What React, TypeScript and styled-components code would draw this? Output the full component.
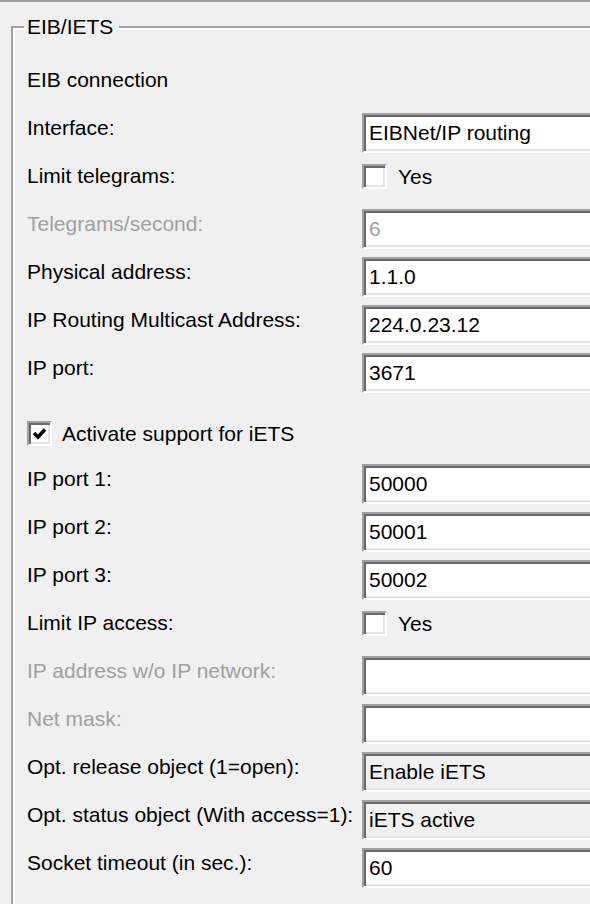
import React from "react";
import styled, { createGlobalStyle } from "styled-components";

const GlobalStyle = createGlobalStyle`
  html, body {
    margin: 0;
    padding: 0;
    background: #f0f0f0;
  }
  body {
    font-family: "Liberation Sans", Arial, sans-serif;
    overflow: hidden;
  }
`;

const Page = styled.div`
  width: 590px;
  height: 904px;
  box-sizing: border-box;
  overflow: hidden;
  border-top: 2px solid #a0a0a0;
  background: #f0f0f0;
`;

const Group = styled.fieldset`
  margin: 13px 0 0 11px;
  padding: 26px 0 20px 14px;
  width: 640px;
  border: 2px solid #a0a0a0;
  box-shadow: inset 2px 2px 0 #fff;
  display: flex;
  flex-direction: column;
  gap: 8px;
`;

const Legend = styled.legend`
  margin-left: -3px;
  padding: 0 6px 0 3px;
  font-size: 21px;
  line-height: 24px;
  color: #000;
  background: #f0f0f0;
`;

const Row = styled.div`
  display: grid;
  grid-template-columns: 335px 260px;
  align-items: start;
  height: 40px;
`;

const Label = styled.span<{ $disabled?: boolean }>`
  padding-top: 3px;
  font-size: 21px;
  line-height: 24px;
  white-space: nowrap;
  color: ${(p) => (p.$disabled ? "#a0a0a0" : "#000")};
`;

const Field = styled.input<{ $gray?: boolean; $disabled?: boolean }>`
  box-sizing: border-box;
  width: 260px;
  height: 40px;
  margin: 0;
  padding: 0 0 0 5px;
  border-style: solid;
  border-width: 2px;
  border-color: #a0a0a0 #fff #fff #a0a0a0;
  box-shadow: inset 2px 2px 0 #696969, inset -2px -2px 0 #e3e3e3;
  font: 21px "Liberation Sans", Arial, sans-serif;
  color: ${(p) => (p.$disabled ? "#a0a0a0" : "#000")};
  background: ${(p) => (p.$gray ? "#f0f0f0" : "#fff")};
  outline: none;
`;

const CheckLine = styled.label<{ $spaced?: boolean }>`
  display: flex;
  align-items: center;
  gap: ${(p) => (p.$spaced ? "10px" : "11px")};
  margin-top: 3px;
  font-size: 21px;
  line-height: 24px;
  color: #000;
`;

const Box = styled.span`
  box-sizing: border-box;
  width: 25px;
  height: 25px;
  display: inline-flex;
  align-items: center;
  justify-content: center;
  border-style: solid;
  border-width: 2px;
  border-color: #a0a0a0 #fff #fff #a0a0a0;
  box-shadow: inset 2px 2px 0 #696969, inset -2px -2px 0 #e3e3e3;
  background: #fff;
`;

const ActivateRow = styled.div`
  height: 38px;
  margin-top: 17px;
`;

function CheckBox({ checked, text, spaced }: { checked?: boolean; text: string; spaced?: boolean }) {
  return (
    <CheckLine $spaced={spaced}>
      <Box>
        {checked && (
          <svg width="15" height="15" viewBox="0 0 15 15">
            <polyline points="2,7 6,11 13,3.5" fill="none" stroke="#000" strokeWidth="3.5" />
          </svg>
        )}
      </Box>
      {text}
    </CheckLine>
  );
}

type Item = {
  label: string;
  value?: string;
  check?: boolean;
  disabled?: boolean;
  gray?: boolean;
};

const eibRows: Item[] = [
  { label: "Interface:", value: "EIBNet/IP routing" },
  { label: "Limit telegrams:", check: true },
  { label: "Telegrams/second:", value: "6", disabled: true },
  { label: "Physical address:", value: "1.1.0" },
  { label: "IP Routing Multicast Address:", value: "224.0.23.12" },
  { label: "IP port:", value: "3671" },
];

const ietsRows: Item[] = [
  { label: "IP port 1:", value: "50000" },
  { label: "IP port 2:", value: "50001" },
  { label: "IP port 3:", value: "50002" },
  { label: "Limit IP access:", check: true },
  { label: "IP address w/o IP network:", value: "", disabled: true },
  { label: "Net mask:", value: "", disabled: true },
  { label: "Opt. release object (1=open):", value: "Enable iETS", gray: true },
  { label: "Opt. status object (With access=1):", value: "iETS active", gray: true },
  { label: "Socket timeout (in sec.):", value: "60" },
];

function SettingRow({ item }: { item: Item }) {
  return (
    <Row>
      <Label $disabled={item.disabled}>{item.label}</Label>
      {item.check ? (
        <CheckBox text="Yes" />
      ) : (
        <Field readOnly defaultValue={item.value} $gray={item.gray} $disabled={item.disabled} />
      )}
    </Row>
  );
}

function App() {
  return (
    <Page>
      <GlobalStyle />
      <Group>
        <Legend>EIB/IETS</Legend>
        <Row>
          <Label>EIB connection</Label>
        </Row>
        {eibRows.map((item) => (
          <SettingRow item={item} key={item.label} />
        ))}
        <ActivateRow>
          <CheckBox checked spaced text="Activate support for iETS" />
        </ActivateRow>
        {ietsRows.map((item) => (
          <SettingRow item={item} key={item.label} />
        ))}
      </Group>
    </Page>
  );
}

export default App;
